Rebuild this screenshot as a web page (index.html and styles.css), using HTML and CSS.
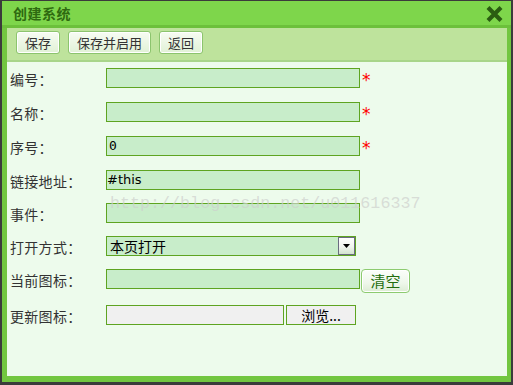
FILE: index.html
```html
<!DOCTYPE html>
<html>
<head>
<meta charset="utf-8">
<link rel="stylesheet" href="styles.css">
</head>
<body>
<div class="window">
  <div class="titlebar">
    <span class="title">创建系统</span>
    <svg class="close" width="19" height="18" viewBox="0 0 19 18">
      <path d="M3 2.5 L16 15.5 M16 2.5 L3 15.5" stroke="#2b5d12" stroke-width="4.2" fill="none"/>
    </svg>
  </div>
  <div class="frame">
    <div class="toolbar">
      <button class="tbtn">保存</button>
      <button class="tbtn">保存并启用</button>
      <button class="tbtn">返回</button>
    </div>
    <div class="content">
      <div class="row"><span class="lbl">编号：</span><span class="input"></span><span class="req">*</span></div>
      <div class="row"><span class="lbl">名称：</span><span class="input"></span><span class="req">*</span></div>
      <div class="row"><span class="lbl">序号：</span><span class="input mono">0</span><span class="req">*</span></div>
      <div class="row"><span class="lbl">链接地址：</span><span class="input latin">#this</span></div>
      <div class="row"><span class="lbl">事件：</span><span class="input"></span></div>
      <div class="row"><span class="lbl">打开方式：</span><span class="select"><span class="seltext">本页打开</span><span class="arrow"><svg width="7" height="4" viewBox="0 0 7 4"><path d="M0 0H7L3.5 4Z" fill="#000"/></svg></span></span></div>
      <div class="row"><span class="lbl">当前图标：</span><span class="input"></span><button class="clear">清空</button></div>
      <div class="row"><span class="lbl">更新图标：</span><span class="filetext"></span><button class="browse">浏览...</button></div>
      <div class="watermark">http://blog.csdn.net/u011616337</div>
    </div>
  </div>
</div>
</body>
</html>
```

FILE: styles.css
```css
html, body {
  margin: 0;
  padding: 0;
}
body {
  background: #3b3b3b;
  width: 513px;
  height: 385px;
  overflow: hidden;
  font-family: "Noto Sans CJK SC", "DejaVu Sans", sans-serif;
}
.window {
  margin: 1px 2px 0 2px;
  width: 509px;
  height: 381px;
  display: flex;
  flex-direction: column;
}
.titlebar {
  height: 24px;
  background: #7ed64b;
  border-bottom: 3px solid #6cc03b;
  display: flex;
  align-items: center;
  justify-content: space-between;
  padding: 0 7px 0 11px;
}
.title {
  font-size: 14px;
  font-weight: bold;
  color: #2e6a10;
  letter-spacing: 0.5px;
}
.close {
  display: block;
  margin-top: 2px;
}
.frame {
  flex: 1;
  display: flex;
  flex-direction: column;
  border-style: solid;
  border-color: #72c640;
  border-width: 0 4px 6px 5px;
  box-shadow: inset 1px 0 0 #8ad85a;
}
.toolbar {
  box-sizing: border-box;
  height: 34px;
  background: #bee39c;
  border-bottom: 2px solid #a8d58a;
  display: flex;
  align-items: flex-start;
  gap: 8px;
  padding: 3px 0 0 9px;
}
.tbtn {
  height: 23px;
  padding: 0 8px;
  border: 1px solid #8cc46e;
  border-radius: 3px;
  background: linear-gradient(#f7fcf3, #e1f1d6);
  box-shadow: inset 0 0 0 1px #ffffff;
  font-family: "Noto Sans CJK SC", sans-serif;
  font-size: 13px;
  color: #333;
  line-height: 20px;
}
.content {
  flex: 1;
  position: relative;
  background: #edfbec;
  padding-left: 3px;
}
.row {
  display: flex;
  align-items: flex-start;
  padding: 6px 0;
}
.lbl {
  width: 96px;
  font-size: 14px;
  line-height: 20px;
  padding-top: 1px;
  color: #333;
  letter-spacing: 0.3px;
}
.input {
  box-sizing: border-box;
  width: 254px;
  height: 20px;
  border: 1px solid #5ea421;
  background: #c8edca;
  font-size: 13px;
  line-height: 18px;
  padding-left: 2px;
  color: #000;
}
.mono {
  font-family: "DejaVu Sans Mono", monospace;
  font-size: 13px;
}
.latin {
  font-family: "DejaVu Sans", "Liberation Sans", sans-serif;
  font-size: 13px;
  padding-left: 0;
}
.req {
  color: #ff0000;
  font-family: "DejaVu Sans", sans-serif;
  font-size: 17px;
  line-height: 20px;
  margin-left: 2px;
  padding-top: 2px;
}
.select {
  box-sizing: border-box;
  width: 250px;
  height: 20px;
  border: 1px solid #5ea421;
  background: #c8edca;
  display: flex;
  justify-content: space-between;
  align-items: stretch;
}
.seltext {
  font-size: 14px;
  line-height: 18px;
  padding-left: 3px;
  color: #000;
}
.arrow {
  box-sizing: border-box;
  width: 17px;
  border: 1px solid #6a6c80;
  background: linear-gradient(#ffffff, #f0f4ee 55%, #d3e4cf);
  display: flex;
  align-items: center;
  justify-content: center;
}
.arrow svg {
  display: block;
}
.clear {
  box-sizing: border-box;
  width: 49px;
  height: 24px;
  margin-left: 1px;
  border: 1px solid #8dcb70;
  border-radius: 4px;
  background: linear-gradient(#fbfefa, #eef7ea 60%, #dcecd3);
  box-shadow: inset 0 0 0 1px #ffffff;
  font-family: "Noto Sans CJK SC", sans-serif;
  font-size: 15px;
  line-height: 20px;
  color: #236d0c;
  padding: 0;
}
.filetext {
  box-sizing: border-box;
  width: 178px;
  height: 20px;
  border: 1px solid #5ea421;
  background: #f0f0f0;
}
.browse {
  box-sizing: border-box;
  width: 70px;
  height: 20px;
  margin-left: 2px;
  border: 1px solid #5ea421;
  background: #f0f0f0;
  font-family: "Noto Sans CJK SC", sans-serif;
  font-size: 14px;
  line-height: 16px;
  color: #000;
  padding: 0;
}
.watermark {
  position: absolute;
  left: 103px;
  top: 131px;
  font-family: "Liberation Mono", monospace;
  font-size: 16.7px;
  line-height: 22px;
  color: rgba(205, 208, 205, 0.7);
  white-space: nowrap;
}
```
